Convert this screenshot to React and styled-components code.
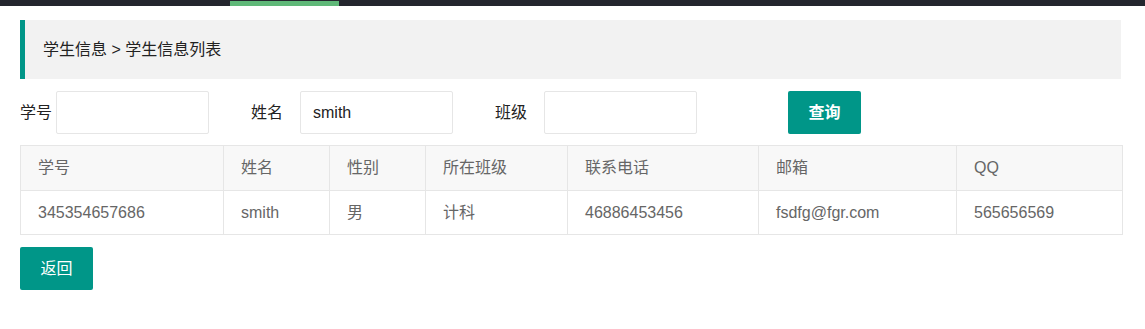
import React from 'react'
import styled, { createGlobalStyle } from 'styled-components'

const GlobalStyle = createGlobalStyle`
    html, body {
        margin: 0;
        padding: 0;
        background: #fff;
    }
    body {
        font-family: "Liberation Sans", Arial, "Noto Sans CJK SC", sans-serif;
        font-size: 16px;
        line-height: 20px;
        color: #333;
    }
    * { box-sizing: border-box; }
`

const TopBar = styled.div`
    height: 6px;
    background: #23262e;
    position: relative;
`

const NavIndicator = styled.span`
    position: absolute;
    left: 230px;
    bottom: 0;
    width: 109px;
    height: 5px;
    background: #5fb878;
`

const Page = styled.div`
    padding: 14px 24px 0 20px;
`

const Breadcrumb = styled.div`
    height: 59px;
    display: flex;
    align-items: center;
    padding-left: 18px;
    background: #f2f2f2;
    border-left: 5px solid #009688;
    color: #222;
    font-size: 16px;
`

const SearchRow = styled.div`
    display: flex;
    align-items: center;
    margin-top: 12px;
    height: 43px;
`

const Field = styled.div`
    display: flex;
    align-items: center;
    margin-left: ${p => p.$first ? 0 : 42}px;
`

const Label = styled.label`
    color: #222;
    margin-right: ${p => p.$tight ? 4 : 17}px;
`

const Input = styled.input`
    width: 153px;
    height: 43px;
    border: 1px solid #e6e6e6;
    border-radius: 2px;
    padding: 0 12px;
    font: inherit;
    color: #222;
    outline: none;
`

const Button = styled.button`
    width: 73px;
    height: 43px;
    border: none;
    border-radius: 2px;
    background: #009688;
    color: #fff;
    font-family: inherit;
    font-size: 16px;
    line-height: 20px;
    font-weight: ${p => p.$bold ? 700 : 400};
    margin-left: ${p => p.$offset || 0}px;
    cursor: pointer;
`

const Table = styled.table`
    width: 1102px;
    margin-top: 11px;
    border-collapse: collapse;
    color: #666;
    table-layout: fixed;
`

const Th = styled.th`
    height: 45px;
    padding: 0 17px;
    text-align: left;
    font-weight: 400;
    background: #f8f8f8;
    border: 1px solid #e6e6e6;
`

const Td = styled.td`
    height: 44px;
    padding: 0 17px;
    border: 1px solid #e6e6e6;
`

const Footer = styled.div`
    margin-top: 12px;
`

const columns = [
    { title: '学号', width: 203 },
    { title: '姓名', width: 106 },
    { title: '性别', width: 96 },
    { title: '所在班级', width: 142 },
    { title: '联系电话', width: 191 },
    { title: '邮箱', width: 198 },
    { title: 'QQ', width: 166 },
]

const rows = [
    ['345354657686', 'smith', '男', '计科', '46886453456', 'fsdfg@fgr.com', '565656569'],
]

export default function App() {
    return (
        <>
            <GlobalStyle />
            <TopBar>
                <NavIndicator />
            </TopBar>
            <Page>
                <Breadcrumb>学生信息 &gt; 学生信息列表</Breadcrumb>

                <SearchRow>
                    <Field $first>
                        <Label $tight>学号</Label>
                        <Input />
                    </Field>
                    <Field>
                        <Label>姓名</Label>
                        <Input defaultValue="smith" />
                    </Field>
                    <Field>
                        <Label>班级</Label>
                        <Input />
                    </Field>
                    <Button $bold $offset={91}>查询</Button>
                </SearchRow>

                <Table>
                    <colgroup>
                        {columns.map(c => <col key={c.title} style={{ width: c.width }} />)}
                    </colgroup>
                    <thead>
                        <tr>
                            {columns.map(c => <Th key={c.title}>{c.title}</Th>)}
                        </tr>
                    </thead>
                    <tbody>
                        {rows.map((r, i) => (
                            <tr key={i}>
                                {r.map((cell, j) => <Td key={j}>{cell}</Td>)}
                            </tr>
                        ))}
                    </tbody>
                </Table>

                <Footer>
                    <Button>返回</Button>
                </Footer>
            </Page>
        </>
    )
}
